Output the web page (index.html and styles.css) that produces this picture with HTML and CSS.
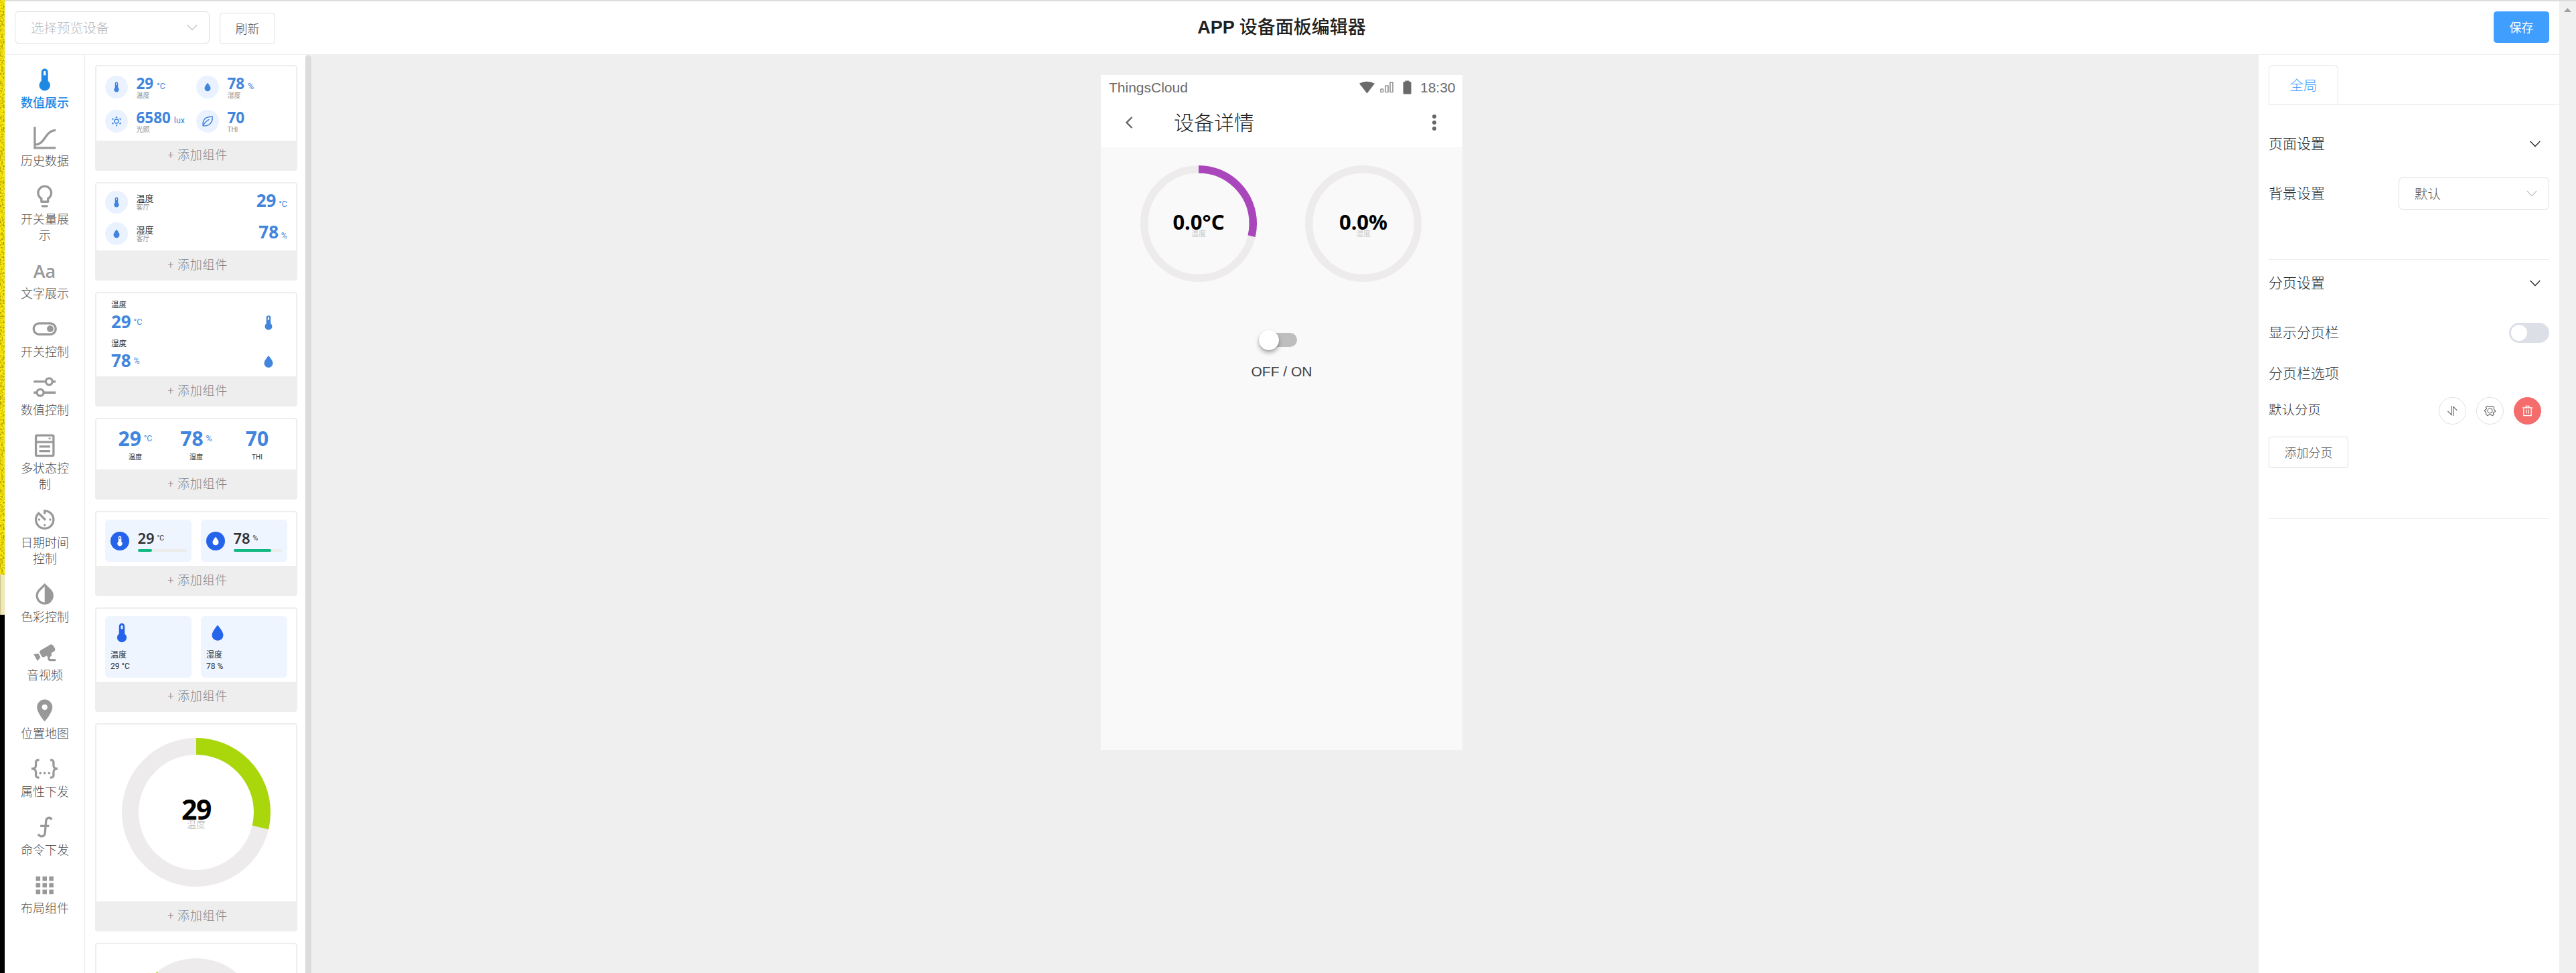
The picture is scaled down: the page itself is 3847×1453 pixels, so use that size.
FILE: index.html
```html
<!DOCTYPE html>
<html lang="zh-CN">
<head>
<meta charset="utf-8">
<title>APP 设备面板编辑器</title>
<link rel="stylesheet" href="styles.css">
</head>
<body>
<svg class="defs" width="0" height="0">
  <symbol id="thermo" viewBox="0 0 24 24"><path d="M15 13V5A3 3 0 0 0 9 5V13A5 5 0 1 0 15 13M12 4A1 1 0 0 1 13 5V8H11V5A1 1 0 0 1 12 4Z"/></symbol>
  <symbol id="drop" viewBox="0 0 24 24"><path d="M12 3.8S6 10.5 6 14.3A6 6 0 0 0 18 14.3C18 10.5 12 3.8 12 3.8Z"/></symbol>
  <symbol id="sun" viewBox="0 0 24 24"><circle cx="12" cy="12" r="4" fill="none" stroke="currentColor" stroke-width="2"/><path d="M12 1.5 14.3 5H9.700ZM12 22.500 14.300 19H9.700ZM2.500 6.500 6.800 6.300 4.700 10.200ZM21.500 6.500 17.200 6.300 19.300 10.200ZM2.500 17.500 6.800 17.700 4.700 13.800ZM21.500 17.500 17.200 17.700 19.300 13.800Z"/></symbol>
  <symbol id="leaf" viewBox="0 0 24 24"><g fill="none" stroke="currentColor" stroke-width="2"><path d="M3 21C1.500 10 7 2.500 21.500 3C22.500 15 15 22.500 3 21Z"/><path d="M3 21C6.500 14 10 11 15.500 8.500"/></g></symbol>
  <symbol id="down" viewBox="0 0 16 16"><path d="M.7 4 8 11.500 15.300 4" fill="none" stroke="currentColor" stroke-width="1.300"/></symbol>
</svg>
<div class="desktop">
  <svg class="wall" width="7" height="858"><filter id="grain" x="0" y="0" width="100%" height="100%"><feTurbulence type="fractalNoise" baseFrequency=".42" numOctaves="2" seed="4"/><feColorMatrix values="0 0 0 0 .38  0 0 0 0 .33  0 0 0 0 0  3.4 0 0 0 -1.5"/></filter><rect width="7" height="858" fill="#fce80a"/><rect width="7" height="858" filter="url(#grain)"/></svg>
  <div class="paper"></div>
</div>
<div class="app">
  <header class="top">
    <div class="select select-dev"><span>选择预览设备</span><svg class="arrow"><use href="#down"/></svg></div>
    <button class="btn refresh">刷新</button>
    <h1>APP <span>设备面板编辑器</span></h1>
    <button class="btn save">保存</button>
  </header>
  <div class="main">
    <nav class="side">
      <a class="on"><svg viewBox="0 0 24 24"><use href="#thermo"/></svg><span>数值展示</span></a>
      <a><svg viewBox="0 0 24 24"><path d="M3 2V21H22" fill="none" stroke="currentColor" stroke-width="2"/><path d="M3.500 18C12.500 18 12 5.500 22 5" fill="none" stroke="currentColor" stroke-width="2"/></svg><span>历史数据</span></a>
      <a><svg viewBox="0 0 24 24"><path d="M12,2A7,7 0 0,1 19,9C19,11.380 17.810,13.470 16,14.740V17A1,1 0 0,1 15,18H9A1,1 0 0,1 8,17V14.740C6.190,13.470 5,11.380 5,9A7,7 0 0,1 12,2M9,21V20H15V21A1,1 0 0,1 14,22H10A1,1 0 0,1 9,21M12,4A5,5 0 0,0 7,9C7,11.050 8.230,12.810 10,13.580V16H14V13.580C15.770,12.810 17,11.050 17,9A5,5 0 0,0 12,4Z"/></svg><span>开关量展示</span></a>
      <a><b class="aa">Aa</b><span>文字展示</span></a>
      <a><svg viewBox="0 0 24 24"><path d="M17 6H7C3.690 6 1 8.690 1 12S3.690 18 7 18H17C20.310 18 23 15.310 23 12S20.310 6 17 6M17 16H7C4.790 16 3 14.210 3 12S4.790 8 7 8H17C19.210 8 21 9.790 21 12S19.210 16 17 16M17 9A3 3 0 1 0 20 12A3 3 0 0 0 17 9Z"/></svg><span>开关控制</span></a>
      <a><svg viewBox="0 0 24 24"><g fill="none" stroke="currentColor" stroke-width="2"><circle cx="16" cy="7" r="3"/><circle cx="8" cy="17" r="3"/><path d="M2 7H13M19 7H22M2 17H5M11 17H22"/></g></svg><span>数值控制</span></a>
      <a><svg viewBox="0 0 24 24"><g fill="none" stroke="currentColor" stroke-width="2"><rect x="4" y="3" width="16" height="18.500" rx="1"/><path d="M4 9H20M7 13.200H17M7 17.200H17"/></g><path d="M15 5.200H18L16.500 7Z"/></svg><span>多状态控制</span></a>
      <a><svg viewBox="0 0 24 24"><path d="M11,17A1,1 0 0,0 12,18A1,1 0 0,0 13,17A1,1 0 0,0 12,16A1,1 0 0,0 11,17M11,3V7H13V5.080C16.390,5.570 19,8.470 19,12A7,7 0 0,1 12,19A7,7 0 0,1 5,12C5,10.320 5.590,8.780 6.580,7.580L12,13L13.410,11.590L6.610,4.790V4.810C4.420,6.450 3,9.050 3,12A9,9 0 0,0 12,21A9,9 0 0,0 21,12A9,9 0 0,0 12,3M18,12A1,1 0 0,0 17,11A1,1 0 0,0 16,12A1,1 0 0,0 17,13A1,1 0 0,0 18,12M6,12A1,1 0 0,0 7,13A1,1 0 0,0 8,12A1,1 0 0,0 7,11A1,1 0 0,0 6,12Z"/></svg><span>日期时间控制</span></a>
      <a><svg viewBox="0 0 24 24"><path d="M12,19.580C10.400,19.580 8.890,18.960 7.760,17.830C6.620,16.690 6,15.190 6,13.580C6,12 6.620,10.470 7.760,9.340L12,5.100M17.660,7.930L12,2.270L6.340,7.930C3.220,11.050 3.220,16.120 6.340,19.240C7.900,20.800 9.950,21.580 12,21.580C14.050,21.580 16.100,20.800 17.660,19.240C20.780,16.120 20.780,11.050 17.660,7.930Z"/></svg><span>色彩控制</span></a>
      <a><svg viewBox="0 0 24 24"><path d="M18.150,4.940C17.770,4.910 17.370,5 17,5.200L8.350,10.200C7.390,10.760 7.070,12 7.620,12.940L9.120,15.530C9.670,16.500 10.890,16.820 11.850,16.270L13.650,15.230C13.920,15.690 14.320,16.060 14.810,16.270V18.040C14.810,19.130 15.700,20 16.810,20H22V18.040H16.810V16.270C17.720,15.870 18.310,14.970 18.310,14C18.310,13.540 18.190,13.110 17.970,12.730L20.500,11.270C21.470,10.710 21.800,9.500 21.240,8.530L19.740,5.940C19.400,5.340 18.790,5 18.150,4.940M6.220,13.170L2,13.870L2.750,15.170L4.750,18.630L5.500,19.930L8.220,16.630L6.220,13.170Z"/></svg><span>音视频</span></a>
      <a><svg viewBox="0 0 24 24"><path d="M12,11.500A2.500,2.500 0 0,1 9.500,9A2.500,2.500 0 0,1 12,6.500A2.500,2.500 0 0,1 14.500,9A2.500,2.500 0 0,1 12,11.500M12,2A7,7 0 0,0 5,9C5,14.250 12,22 12,22C12,22 19,14.250 19,9A7,7 0 0,0 12,2Z"/></svg><span>位置地图</span></a>
      <a><svg viewBox="0 0 24 24"><g fill="none" stroke="currentColor" stroke-width="2"><path d="M7 4H6A2 2 0 0 0 4 6V9A3 3 0 0 1 1 12H0M7 20H6A2 2 0 0 1 4 18V15A3 3 0 0 0 1 12M17 4H18A2 2 0 0 1 20 6V9A3 3 0 0 0 23 12H24M17 20H18A2 2 0 0 0 20 18V15A3 3 0 0 1 23 12"/></g><circle cx="8" cy="16" r="1.100"/><circle cx="12" cy="16" r="1.100"/><circle cx="16" cy="16" r="1.100"/></svg><span>属性下发</span></a>
      <a><svg viewBox="0 0 24 24"><path d="M18.400 5.200C16.800 2.600 13.500 3.500 13.200 6.500L12.300 17.200C12 20.600 8.800 21.800 6 18.600M8 11H16" fill="none" stroke="currentColor" stroke-width="2"/></svg><span>命令下发</span></a>
      <a><svg viewBox="0 0 24 24"><path d="M4 4H8V8H4ZM10 4H14V8H10ZM16 4H20V8H16ZM4 10H8V14H4ZM10 10H14V14H10ZM16 10H20V14H16ZM4 16H8V20H4ZM10 16H14V20H10ZM16 16H20V20H16Z"/></svg><span>布局组件</span></a>
    </nav>
    <section class="panel">
      <article class="card c1">
        <div class="body">
          <div class="cell"><i class="dot"><svg><use href="#thermo"/></svg></i><div><p class="num">29 <small>°C</small></p><p class="sub">温度</p></div></div>
          <div class="cell"><i class="dot"><svg><use href="#drop"/></svg></i><div><p class="num">78 <small>%</small></p><p class="sub">湿度</p></div></div>
          <div class="cell"><i class="dot"><svg><use href="#sun"/></svg></i><div><p class="num">6580 <small>lux</small></p><p class="sub">光照</p></div></div>
          <div class="cell"><i class="dot"><svg><use href="#leaf"/></svg></i><div><p class="num">70</p><p class="sub">THI</p></div></div>
        </div>
        <footer>+ 添加组件</footer>
      </article>
      <article class="card c2">
        <div class="body">
          <div class="row"><i class="dot"><svg><use href="#thermo"/></svg></i><div class="names"><p>温度</p><p class="sub">客厅</p></div><p class="num">29 <small>°C</small></p></div>
          <div class="row"><i class="dot"><svg><use href="#drop"/></svg></i><div class="names"><p>湿度</p><p class="sub">客厅</p></div><p class="num">78 <small>%</small></p></div>
        </div>
        <footer>+ 添加组件</footer>
      </article>
      <article class="card c3">
        <div class="body">
          <div class="row"><div><p class="lbl">温度</p><p class="num">29 <small>°C</small></p></div><svg><use href="#thermo"/></svg></div>
          <div class="row"><div><p class="lbl">湿度</p><p class="num">78 <small>%</small></p></div><svg><use href="#drop"/></svg></div>
        </div>
        <footer>+ 添加组件</footer>
      </article>
      <article class="card c4">
        <div class="body">
          <div><p class="num">29 <small>°C</small></p><p class="lbl">温度</p></div>
          <div><p class="num">78 <small>%</small></p><p class="lbl">湿度</p></div>
          <div><p class="num">70</p><p class="lbl">THI</p></div>
        </div>
        <footer>+ 添加组件</footer>
      </article>
      <article class="card c5">
        <div class="body">
          <div class="tile"><i class="dot"><svg><use href="#thermo"/></svg></i><div class="meter"><p class="num">29 <small>°C</small></p><div class="bar"><i style="width:29%"></i></div></div></div>
          <div class="tile"><i class="dot"><svg><use href="#drop"/></svg></i><div class="meter"><p class="num">78 <small>%</small></p><div class="bar"><i style="width:78%"></i></div></div></div>
        </div>
        <footer>+ 添加组件</footer>
      </article>
      <article class="card c6">
        <div class="body">
          <div class="tile"><svg><use href="#thermo"/></svg><p>温度</p><p>29 °C</p></div>
          <div class="tile"><svg><use href="#drop"/></svg><p>湿度</p><p>78 %</p></div>
        </div>
        <footer>+ 添加组件</footer>
      </article>
      <article class="card c7">
        <div class="body">
          <svg class="ring" viewBox="0 0 224 224"><circle class="track" cx="112" cy="112" r="98.500"/><circle class="arc" cx="112" cy="112" r="98.500" pathLength="100" stroke-dasharray="28.700 100" transform="rotate(-90 112 112)"/></svg>
          <div class="center"><p class="num">29</p><p>温度</p></div>
        </div>
        <footer>+ 添加组件</footer>
      </article>
      <article class="card c8">
        <div class="body"><svg viewBox="0 0 190 95" width="190" height="95"><path class="track" d="M19 95A76 76 0 0 1 171 95" stroke-width="36"/><path class="arc" d="M19 95A76 76 0 0 1 171 95" stroke-width="36" pathLength="100" stroke-dasharray="28.700 100"/></svg></div>
      </article>
    </section>
    <div class="scroll"></div>
    <section class="stage">
      <div class="phone">
        <div class="status"><span>ThingsCloud</span>
          <svg width="84" height="24" viewBox="0 0 84 24"><path d="M0 4.800Q11.500-1.200 23 4.800L11.500 19.500Z"/><path d="M32 13h3.500v4.500h-3.500zM39 8h4v9.500h-4zM46 3h4v14.500h-4z" fill="none" stroke="currentColor" stroke-width="1.200"/><path d="M68.500 .5h6V2H76q1.500 0 1.500 1.500V19q0 1.500-1.500 1.500H67q-1.500 0-1.500-1.500V3.500Q65.500 2 67 2h1.500z"/></svg>
          <span class="time">18:30</span></div>
        <div class="nav"><svg width="12" height="18" viewBox="0 0 12 18"><path d="M10.500 1 2.500 9l8 8" fill="none" stroke="currentColor" stroke-width="2.400"/></svg><h2>设备详情</h2><svg width="6" height="26" viewBox="0 0 6 26"><circle cx="3" cy="4" r="3"/><circle cx="3" cy="13" r="3"/><circle cx="3" cy="22" r="3"/></svg></div>
        <div class="gauges">
          <div class="gauge"><svg viewBox="0 0 176 176"><circle class="track" cx="88" cy="88" r="81.300"/><circle class="arc" cx="88" cy="88" r="81.300" pathLength="100" stroke-dasharray="28.700 100" transform="rotate(-90 88 88)"/></svg><div class="center"><p class="num">0.0°C</p><p>温度</p></div></div>
          <div class="gauge"><svg viewBox="0 0 176 176"><circle class="track" cx="88" cy="88" r="81.300"/></svg><div class="center"><p class="num">0.0%</p><p>湿度</p></div></div>
        </div>
        <div class="toggle"><i></i></div>
        <p class="onoff">OFF / ON</p>
      </div>
    </section>
    <aside class="props">
      <div class="tabs"><span>全局</span></div>
      <div class="line head h1"><span>页面设置</span><svg class="arrow"><use href="#down"/></svg></div>
      <div class="line bg"><span>背景设置</span><div class="select"><span>默认</span><svg class="arrow"><use href="#down"/></svg></div></div>
      <hr>
      <div class="line head h2"><span>分页设置</span><svg class="arrow"><use href="#down"/></svg></div>
      <div class="line show"><span>显示分页栏</span><div class="switch"><i></i></div></div>
      <div class="line opts"><span>分页栏选项</span></div>
      <div class="line page"><span>默认分页</span><div class="acts">
        <i><svg viewBox="0 0 18 18"><path d="M7.500 1V15.500L1.500 9.500M10.500 17V2.500L16.500 8.500" fill="none" stroke="currentColor" stroke-width="1.200"/></svg></i>
        <i><svg viewBox="0 0 18 18"><g fill="none" stroke="currentColor" stroke-width="1.200"><circle cx="9" cy="9" r="3.700"/><path d="M5 1.500Q6.500 2.800 9 2.800T13 1.500L15.400 3.300Q14.800 5.500 15.600 6.800T17.300 9T15.600 11.200T15.400 14.700L13 16.500Q11.500 15.200 9 15.200T5 16.500L2.600 14.700Q3.200 12.500 2.400 11.200T.7 9T2.400 6.800T2.600 3.300Z"/></g></svg></i>
        <i class="del"><svg viewBox="0 0 18 18"><path d="M1 4H17M6.500 4V1.500H11.500V4M3 4V16.500H15V4M7.300 7V13.500M10.700 7V13.500" fill="none" stroke="currentColor" stroke-width="1.300"/></svg></i>
      </div></div>
      <button class="btn add">添加分页</button>
      <hr>
    </aside>
  </div>
</div>
<div class="vbar"><i></i></div>
</body>
</html>
```
FILE: styles.css
```css
* { box-sizing: border-box; }
body { margin: 0; width: 3847px; height: 1453px; overflow: hidden; display: flex; font-family: "Noto Sans CJK SC", sans-serif; font-weight: 300; color: #303133; background: #fff; }
p, h1, h2 { margin: 0; white-space: nowrap; }
svg { fill: currentColor; display: block; flex: none; }
i { font-style: normal; display: block; }
.defs { position: absolute; }
.desktop { width: 7px; background: #000; }
.paper { height: 60px; background: #f2e8b6; border-left: 1px solid #c9c08f; }
.app { width: 3815px; border-top: 2px solid #dcdcdc; }
.vbar { width: 25px; background: #f0f0f0; border-top: 2px solid #dcdcdc; padding: 10px 0 0 7px; }
.vbar i { width: 11px; height: 6px; background: #a0a0a0; clip-path: polygon(50% 0, 100% 100%, 0 100%); }

.top { height: 80px; border-bottom: 1px solid #eee; display: grid; grid-template-columns: 291px 83px 1fr 83px; column-gap: 15px; padding: 15px 15px 0; }
.select { height: 48px; border: 1px solid #dcdfe6; border-radius: 6px; display: flex; align-items: center; justify-content: space-between; padding: 0 17px 0 23px; font-size: 19.5px; color: #555; }
.select > span { margin-top: -2px; }
.select-dev { color: #b4b8c0; }
.arrow { width: 16px; height: 16px; }
.select .arrow { color: #c0c4cc; }
.btn { height: 47px; border: 1px solid #dcdfe6; border-radius: 4.500px; background: #fff; color: #4c4e52; font: 300 18px/43px "Noto Sans CJK SC", sans-serif; padding: 0; text-align: center; }
.refresh { margin-top: 2px; }
.save { background: #409eff; border-color: #409eff; color: #fff; font-weight: 400; }
.top h1 { font: 700 27px/44px "Liberation Sans", sans-serif; color: #212121; text-align: center; padding-right: 307px; }
.top h1 span { font-family: "Noto Sans CJK SC"; font-weight: 500; }

.main { display: flex; height: 1371px; }
.side { width: 120px; border-right: 1px solid #ebebeb; padding-top: 16px; display: flex; flex-direction: column; align-items: center; }
.side a { width: 76px; padding-bottom: 21px; display: flex; flex-direction: column; align-items: center; color: #999; }
.side svg { width: 39.500px; height: 42px; }
.side span { font-size: 18px; line-height: 24px; color: #505050; text-align: center; width: 74px; padding-left: 1px; white-space: normal; word-break: break-all; }
.aa { font: 600 27px/44px "Open Sans", sans-serif; height: 42px; }
.side .on, .side .on span { color: #1e88e5; }
.side .on span { font-weight: 500; }

.panel { width: 329px; padding: 15px 12px 0 15px; overflow: hidden; }
.card { border: 2px solid #eee; border-radius: 4px; margin-bottom: 17px; display: flex; flex-direction: column; width: 302px; }
.body { flex: 1; min-height: 0; color: #4285dd; }
.card footer { flex: none; height: 43px; background: #eee; color: #83868c; font-size: 18px; line-height: 41px; letter-spacing: .75px; text-align: center; padding-left: 4px; }
.num { font-family: "Noto Sans", sans-serif; font-weight: 700; }
.num small { font: 400 12.500px/1 Roboto, sans-serif; letter-spacing: 0; }
.sub { font: 400 10px/14px Roboto, "Noto Sans CJK SC", sans-serif; color: #909090; }
.dot { width: 34px; height: 34px; border-radius: 50%; background: #e9f2fe; display: grid; place-items: center; flex: none; }
.dot svg { width: 18px; height: 18px; }
.c1 { height: 158px; }
.c1 .body { display: grid; grid-template-columns: 136px 136px; grid-auto-rows: 51px; padding: 14px 0 0 13px; }
.cell { display: flex; gap: 12.500px; }
.c1 .num { font-size: 22.500px; line-height: 22px; padding-top: 1px; }
.c1 .num small { margin-left: -1px; }
.c2 { height: 147px; }
.c2 .body { padding: 11px 13px 0; }
.c2 .row { display: flex; height: 46.500px; gap: 12.500px; }
.names { flex: 1; color: #303133; font-size: 13px; line-height: 17px; padding-top: 2px; font-weight: 400; }
.names .sub { line-height: 12px; }
.c2 .num { font-size: 26px; line-height: 29px; }
.c2 small { margin-left: -3px; }
.c3 { height: 171px; }
.lbl { font: 400 11.500px/16px Roboto, "Noto Sans CJK SC", sans-serif; color: #303133; }
.c3 .body { padding: 9px 28px 0 22px; }
.c3 .row { display: flex; justify-content: space-between; height: 58px; }
.c3 .row svg { width: 26px; height: 26px; margin-top: 22px; }
.c3 .num { font-size: 26px; line-height: 34px; }
.c3 small { vertical-align: 5px; margin-left: -3px; }
.c4 { height: 122px; }
.c4 .body { display: grid; grid-template-columns: repeat(3, 91px); justify-content: center; text-align: center; padding-top: 10px; }
.c4 .num { font-size: 30px; line-height: 38px; }
.c4 small { vertical-align: 7px; margin-left: -4px; }
.c4 .lbl { font-size: 10px; line-height: 17px; }
.c5 { height: 127px; }
.c5 .body, .c6 .body { display: grid; grid-template-columns: 129px 129px; column-gap: 14px; padding: 11px 0 6px 13px; }
.tile { background: #eef5ff; border-radius: 6px; color: #303133; }
.c5 .tile { display: flex; align-items: center; padding-left: 8px; gap: 12.500px; }
.c5 .dot { width: 28px; height: 28px; background: #2563eb; color: #fff; }
.meter { width: 73px; padding-bottom: 1px; }
.c5 .num { font-size: 22px; line-height: 26px; font-weight: 600; }
.c5 small { font-size: 10.500px; vertical-align: 5px; margin-left: -2px; }
.bar { height: 4px; border-radius: 2px; background: #ececec; margin-top: 4px; }
.bar i { height: 4px; border-radius: 2px; background: #10b981; }
.c6 { height: 156px; }
.c6 .tile { padding: 8px 0 0 8px; font: 400 12px/17px Roboto, "Noto Sans CJK SC", sans-serif; }
.c6 .tile svg { width: 34px; height: 34px; color: #2563eb; margin-bottom: 8px; }
.c7 { height: 311px; }
.c7 .body, .gauge { display: grid; place-items: center; }
.c7 .body { padding-bottom: 2px; }
.c7 .body > *, .gauge > * { grid-area: 1 / 1; }
.ring { width: 224px; height: 224px; }
.track { fill: none; stroke: #edebeb; }
.arc { fill: none; stroke: #a9d70b; }
.ring circle { stroke-width: 25px; }
.center { text-align: center; font-size: 14px; line-height: 16px; color: #b3b3b3; }
.center .num { color: #000; }
.center .num + p { margin-top: -3px; }
.c7 .num { font-size: 41px; line-height: 34px; letter-spacing: -1.500px; padding-top: 3px; }
.c8 { height: 200px; flex: none; }
.c8 .body { padding: 20px 0 0 54px; }
.scroll { width: 9px; background: #dcdcdc; border-radius: 5px 5px 0 0; }

.stage { width: 2908px; background: #efefef; padding-top: 30px; }
.phone { width: 540px; height: 1008px; margin-left: 1179px; background: #f9f9f9; }
.status { height: 37px; background: #fff; display: flex; align-items: center; padding: 0 12px; font: 400 21px/35px "Liberation Sans", sans-serif; color: #6a6a6a; }
.status svg { margin: 3px 7px 0 auto; }
.status .time { width: 51px; text-align: right; }
.nav { height: 71px; background: #fff; display: flex; align-items: flex-start; padding: 0 39px 0 36px; color: #666; }
.nav h2 { font-size: 30px; font-weight: 300; line-height: 64px; color: #212121; margin: 0 auto 0 61px; }
.nav svg { margin-top: 25px; }
.nav h2 + svg { margin-top: 21px; }
.gauges { display: flex; gap: 70px; padding: 26px 0 0 58px; height: 276px; }
.gauge { width: 176px; height: 176px; }
.gauge svg { width: 176px; height: 176px; }
.gauge circle { stroke-width: 11.500px; }
.gauge .arc { stroke: #a946bb; }
.gauge .center { font-size: 11px; line-height: 14px; }
.gauge .num { font-size: 31px; line-height: 26px; padding-top: 5px; }
.toggle { width: 51px; height: 21px; border-radius: 11px; background: #bebebe; margin: 1px 0 0 242px; }
.toggle i { width: 30px; height: 30px; border-radius: 50%; background: #fff; box-shadow: 0 4px 6px rgba(0,0,0,.3), 0 1px 2px rgba(0,0,0,.15); position: relative; left: -6px; top: -4px; }
.onoff { font: 400 21px/30px "Liberation Sans", sans-serif; color: #424242; text-align: center; margin-top: 22px; }

.props { width: 449px; padding: 15px 15px 0; font-size: 21px; }
.tabs { height: 60px; border-bottom: 1px solid #e4e7ed; margin-right: -15px; }
.tabs span { display: block; width: 104px; height: 60px; border: 1px solid #e4e7ed; border-bottom: 0; border-radius: 6px 6px 0 0; text-align: center; line-height: 57px; font-size: 20.500px; color: #409eff; }
.line { display: flex; align-items: center; justify-content: space-between; height: 50px; color: #303030; }
.line > span { line-height: 46px; margin-top: -4px; }
.head { color: #202122; padding-right: 13px; }
.line.h1 { margin-top: 33px; }
.bg { margin-top: 24px; }
.bg .select { width: 225px; }
.props hr { border: 0; border-top: 1px solid #ebeef0; margin: 73px 0 0; }
.line.h2 { margin-top: 10px; }
.show { margin-top: 24px; }
.switch { width: 60px; height: 30px; border-radius: 15px; background: #dcdfe6; padding: 3px; }
.switch i { width: 24px; height: 24px; border-radius: 50%; background: #fff; }
.opts { margin-top: 11px; }
.page { font-size: 19.500px; margin-top: 5px; }
.acts { display: flex; gap: 15px; padding-right: 12px; color: #606266; }
.acts i { width: 41px; height: 41px; border: 1px solid #dcdfe6; border-radius: 50%; display: grid; place-items: center; }
.acts svg { width: 17px; height: 17px; }
.acts .del { background: #f56c6c; border-color: #f56c6c; color: #fff; }
.add { width: 119px; margin-top: 14px; display: block; }
.add + hr { margin-top: 75px; }
```
